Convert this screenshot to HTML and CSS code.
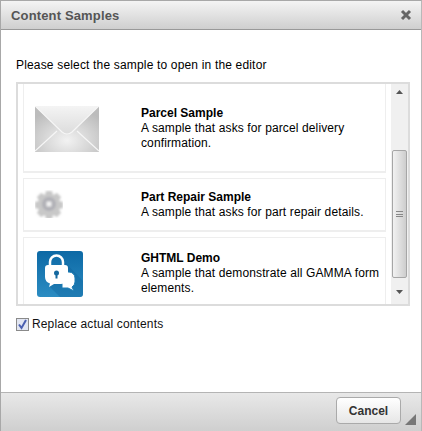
FILE: index.html
```html
<!DOCTYPE html>
<html lang="en">
<head>
<meta charset="utf-8">
<title>Content Samples</title>
<link rel="stylesheet" href="styles.css">
</head>
<body>
<div class="dialog">
  <header class="titlebar">
    <h1 class="title">Content Samples</h1>
    <svg class="close" width="12" height="12" viewBox="0 0 12 12"><path d="M2 2L10 10M10 2L2 10" stroke="#666" stroke-width="3" fill="none"/></svg>
  </header>
  <main class="content">
    <p class="prompt">Please select the sample to open in the editor</p>
    <div class="listbox">
      <div class="items">
        <div class="item item-parcel">
          <div class="thumb">
            <svg width="64" height="46" viewBox="0 0 64 46">
              <defs>
                <linearGradient id="env" x1="0" y1="0" x2="0" y2="1"><stop offset="0" stop-color="#f4f4f4"/><stop offset="1" stop-color="#dcdcdc"/></linearGradient>
                <radialGradient id="env2" cx="0.5" cy="0.75" r="0.7"><stop offset="0" stop-color="#f2f2f2"/><stop offset="1" stop-color="#bcbcbc"/></radialGradient>
              </defs>
              <rect x="0" y="0" width="64" height="46" fill="url(#env2)"/>
              <path d="M0 0H64L37 26Q32 30 27 26Z" fill="url(#env)"/>
              <path d="M0 0L27 26Q32 30 37 26L64 0M0 45L22 25M64 45L42 25" stroke="#f6f6f6" stroke-width="1.2" fill="none"/>
            </svg>
          </div>
          <div class="text">
            <div class="name">Parcel Sample</div>
            <div class="desc">A sample that asks for parcel delivery confirmation.</div>
          </div>
        </div>
        <div class="item item-repair">
          <div class="thumb">
            <svg width="28" height="28" viewBox="0 0 28 28">
              <defs><filter id="blur"><feGaussianBlur stdDeviation="1.1"/></filter></defs>
              <g filter="url(#blur)">
                <path d="M11 1h6l1 4 4-2 4 4-2 4 4 1v6l-4 1 2 4-4 4-4-2-1 4h-6l-1-4-4 2-4-4 2-4-4-1v-6l4-1-2-4 4-4 4 2z" fill="#c8c8c8"/>
                <circle cx="14" cy="14" r="7" fill="#b0b0b6"/>
                <rect x="11.500" y="11.500" width="5" height="5" fill="#f2f2f2"/>
              </g>
            </svg>
          </div>
          <div class="text">
            <div class="name">Part Repair Sample</div>
            <div class="desc">A sample that asks for part repair details.</div>
          </div>
        </div>
        <div class="item item-demo">
          <div class="thumb">
            <svg class="lock" width="46" height="46" viewBox="0 0 46 46">
              <defs><linearGradient id="blue" x1="0" y1="0" x2="0" y2="1"><stop offset="0" stop-color="#0d69a5"/><stop offset="1" stop-color="#2b8cc2"/></linearGradient></defs>
              <rect width="46" height="46" rx="3" fill="url(#blue)"/>
              <path d="M13 36L26 9L46 30V43a3 3 0 0 1-3 3H23z" fill="#0b5f98" opacity=".35"/>
              <path d="M25 21h7a6 6 0 0 1 6 6v4a6 6 0 0 1-3 5l2 4-6-3h-6z" fill="#fff" stroke="#1d7db5" stroke-width="1"/>
              <path d="M13 14v-3a6.500 6.500 0 0 1 13 0v3" fill="none" stroke="#fff" stroke-width="2.500"/>
              <path d="M11 14h17a3 3 0 0 1 3 3v9a7 7 0 0 1-7 7h-1l-6 0-5 3 1-3.500a7 7 0 0 1-5-6.500v-9a3 3 0 0 1 3-3z" fill="#fff"/>
              <circle cx="19.500" cy="22" r="2.500" fill="#14689f"/>
              <rect x="18.500" y="23" width="2" height="4.500" fill="#14689f"/>
            </svg>
          </div>
          <div class="text">
            <div class="name">GHTML Demo</div>
            <div class="desc">A sample that demonstrate all GAMMA form elements.</div>
          </div>
        </div>
      </div>
      <div class="scrollbar">
        <div class="arrow"><svg width="7" height="4" viewBox="0 0 7 4"><path d="M3.500 0L7 4H0z" fill="#555"/></svg></div>
        <div class="track">
          <div class="thumbbar"><span class="grip"></span></div>
        </div>
        <div class="arrow"><svg width="7" height="4" viewBox="0 0 7 4"><path d="M0 0H7L3.500 4z" fill="#555"/></svg></div>
      </div>
    </div>
    <label class="replace">
      <span class="checkbox"><svg width="11" height="11" viewBox="0 0 11 11"><path d="M2 5.500L4.500 9L9 1" fill="none" stroke="#4a5fb0" stroke-width="2"/></svg></span>
      Replace actual contents
    </label>
  </main>
  <footer class="footer">
    <button class="cancel" type="button">Cancel</button>
    <svg class="resize" width="11" height="11" viewBox="0 0 11 11"><path d="M11 0V11H0z" fill="#777"/></svg>
  </footer>
</div>
</body>
</html>
```
FILE: styles.css
```css
* { box-sizing: border-box; }
html, body { margin: 0; height: 100%; }
body { font-family: "Liberation Sans", Arial, sans-serif; font-size: 12px; color: #000; background: #fff; }
.dialog { width: 422px; height: 431px; display: flex; flex-direction: column; border: 1px solid #a8a8a8; border-bottom: 0; border-right-color: #b8b8b8; position: relative; }
.titlebar { height: 29px; flex: none; display: flex; align-items: center; justify-content: space-between; padding: 0 9px 0 10px; background: linear-gradient(#f4f4f4, #cfcfcf); border-bottom: 1px solid #999; }
.title { margin: 0; font-size: 13px; font-weight: bold; color: #555; letter-spacing: .15px; }
.content { flex: 1; padding: 0 11px 0 15px; display: flex; flex-direction: column; min-height: 0; }
.prompt { margin: 28px 0 10px; line-height: 15px; height: 14px; letter-spacing: .17px; }
.listbox { height: 224px; flex: none; border: 2px solid #dcdcdc; display: flex; padding-left: 5px; }
.items { flex: 1; min-width: 0; overflow: hidden; display: flex; flex-direction: column; gap: 5px; margin-right: 5px; }
.item { flex: none; display: flex; border: 1px solid #eee; border-bottom-width: 2px; padding-left: 11px; }
.item-parcel { height: 89px; border-top: 0; align-items: flex-start; padding-top: 22px; }
.item-repair { height: 54px; padding-top: 11px; }
.item-demo { height: 72px; padding-top: 13px; border-bottom: 0; }
.thumb { width: 106px; flex: none; }
.thumb svg { display: block; }
.item-demo .thumb svg { margin-left: 2px; }
.text { flex: 1; min-width: 0; padding-right: 5px; line-height: 15px; }
.desc { letter-spacing: .12px; }
.name { font-weight: bold; }
.scrollbar { width: 17px; flex: none; background: #f0f0f0; display: flex; flex-direction: column; }
.arrow { height: 16px; flex: none; display: flex; align-items: center; justify-content: center; }
.arrow:last-child { height: 20px; padding-bottom: 5px; }
.track { flex: 1; display: flex; flex-direction: column; justify-content: flex-end; padding-bottom: 6px; }
.thumbbar { height: 128px; margin: 0 1px; border: 1px solid #a6a6a6; border-radius: 2px; background: linear-gradient(90deg, #f2f2f2, #cdcdcd); display: flex; align-items: center; justify-content: center; }
.grip { width: 7px; height: 6px; border-top: 1px solid #888; border-bottom: 1px solid #888; background: linear-gradient(#fff0 2px, #888 2px, #888 3px, #fff0 3px); }
.replace { margin-top: 11px; display: flex; align-items: center; gap: 3px; line-height: 14px; color: #111; letter-spacing: .14px; }
.checkbox { width: 13px; height: 13px; border: 1px solid #8a8a8a; background: #e2e6f2; display: flex; align-items: center; justify-content: center; }
.footer { height: 39px; flex: none; display: flex; align-items: flex-start; justify-content: flex-end; padding: 4px 20px 0 0; background: linear-gradient(#e8e8e8, #cfcfcf); border-top: 1px solid #b4b4b4; position: relative; }
.cancel { width: 65px; height: 27px; padding: 0; font: bold 12px "Liberation Sans", Arial, sans-serif; color: #333; background: linear-gradient(#fff, #e6e6e6); border: 1px solid #aaa; border-radius: 4px; }
.resize { position: absolute; right: 5px; bottom: 6px; }
```
